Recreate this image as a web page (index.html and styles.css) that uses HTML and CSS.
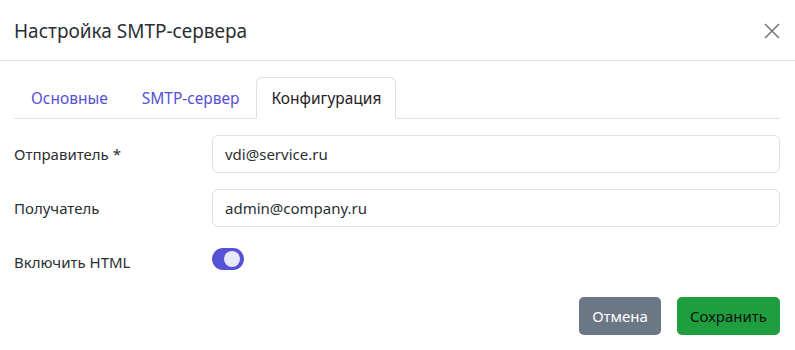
FILE: index.html
```html
<!DOCTYPE html>
<html lang="ru">
<head>
<meta charset="utf-8">
<title>Настройка SMTP-сервера</title>
<link rel="stylesheet" href="styles.css">
</head>
<body>
<div class="modal">
  <div class="modal-header">
    <h2 class="modal-title">Настройка SMTP-сервера</h2>
    <button class="close" aria-label="Закрыть">
      <svg width="16" height="16" viewBox="0 0 16 16"><path d="M1 1 L15 15 M15 1 L1 15" stroke="#7a7a7a" stroke-width="1.6" fill="none"/></svg>
    </button>
  </div>
  <div class="modal-body">
    <ul class="tabs">
      <li class="tab">Основные</li>
      <li class="tab">SMTP-сервер</li>
      <li class="tab active">Конфигурация</li>
    </ul>
    <div class="form">
      <div class="row">
        <label class="label">Отправитель *</label>
        <div class="input">vdi@service.ru</div>
      </div>
      <div class="row">
        <label class="label">Получатель</label>
        <div class="input">admin@company.ru</div>
      </div>
      <div class="row">
        <label class="label">Включить HTML</label>
        <div class="switch-wrap"><span class="switch"><span class="knob"></span></span></div>
      </div>
    </div>
  </div>
  <div class="modal-footer">
    <button class="btn btn-cancel">Отмена</button>
    <button class="btn btn-save">Сохранить</button>
  </div>
</div>
</body>
</html>
```

FILE: styles.css
```css
* { box-sizing: border-box; }
html, body { margin: 0; background: #fff; }
body {
  font-family: "Noto Sans", "Open Sans", sans-serif;
  color: #2b2f33;
  font-size: 15px;
}
.modal { width: 795px; height: 350px; display: flex; flex-direction: column; }
.modal-header {
  height: 61px;
  border-bottom: 1px solid #dee2e6;
  display: flex;
  align-items: center;
  justify-content: space-between;
  padding: 0 14px 0 14px;
}
.modal-title {
  margin: 0;
  font-size: 19px;
  font-weight: 400;
  color: #2b2f33;
  padding-top: 2px;
}
.close {
  border: 0;
  background: none;
  padding: 0;
  width: 16px;
  height: 16px;
  display: block;
  margin-right: 1px;
  margin-top: 2px;
}
.close svg { display: block; }
.modal-body { padding: 16px 15px 0 14px; }
.tabs {
  list-style: none;
  margin: 0;
  padding: 0;
  display: flex;
  border-bottom: 1px solid #dee2e6;
  height: 42px;
}
.tab {
  padding: 0 16px;
  line-height: 40px;
  height: 41px;
  color: #5750d5;
  border: 1px solid transparent;
  border-top-left-radius: 6px;
  border-top-right-radius: 6px;
  font-size: 15.5px;
}
.tab.active {
  color: #1f2225;
  border-color: #dee2e6;
  border-bottom-color: #fff;
  background: #fff;
  height: 42px;
  padding: 0 14px 0 14px;
}
.form { padding-top: 16px; display: flex; flex-direction: column; gap: 16px; }
.row { display: grid; grid-template-columns: 198px 1fr; }
.label { padding-top: 7px; line-height: 24px; color: #2b2f33; }
.input {
  height: 38px;
  border: 1px solid #dee2e6;
  border-radius: 6px;
  padding: 0 12px;
  line-height: 36px;
  color: #2b2f33;
}
.switch-wrap { padding-top: 5px; }
.switch {
  display: flex;
  align-items: center;
  justify-content: flex-end;
  width: 32px;
  height: 22px;
  border-radius: 11px;
  background: #5751d6;
  padding-right: 4px;
}
.knob {
  width: 16px;
  height: 16px;
  border-radius: 50%;
  background: #e9e7fa;
}
.modal-footer {
  margin-top: auto;
  display: flex;
  justify-content: flex-end;
  gap: 16px;
  padding: 0 15px 15px 0;
}
.btn {
  font-family: inherit;
  font-size: 15px;
  height: 38px;
  border: 0;
  border-radius: 5px;
  padding: 0 12px;
}
.btn-cancel { background: #6c7785; color: #fff; width: 82px; }
.btn-save { background: #1e9e3e; color: #111; width: 103px; }
```
